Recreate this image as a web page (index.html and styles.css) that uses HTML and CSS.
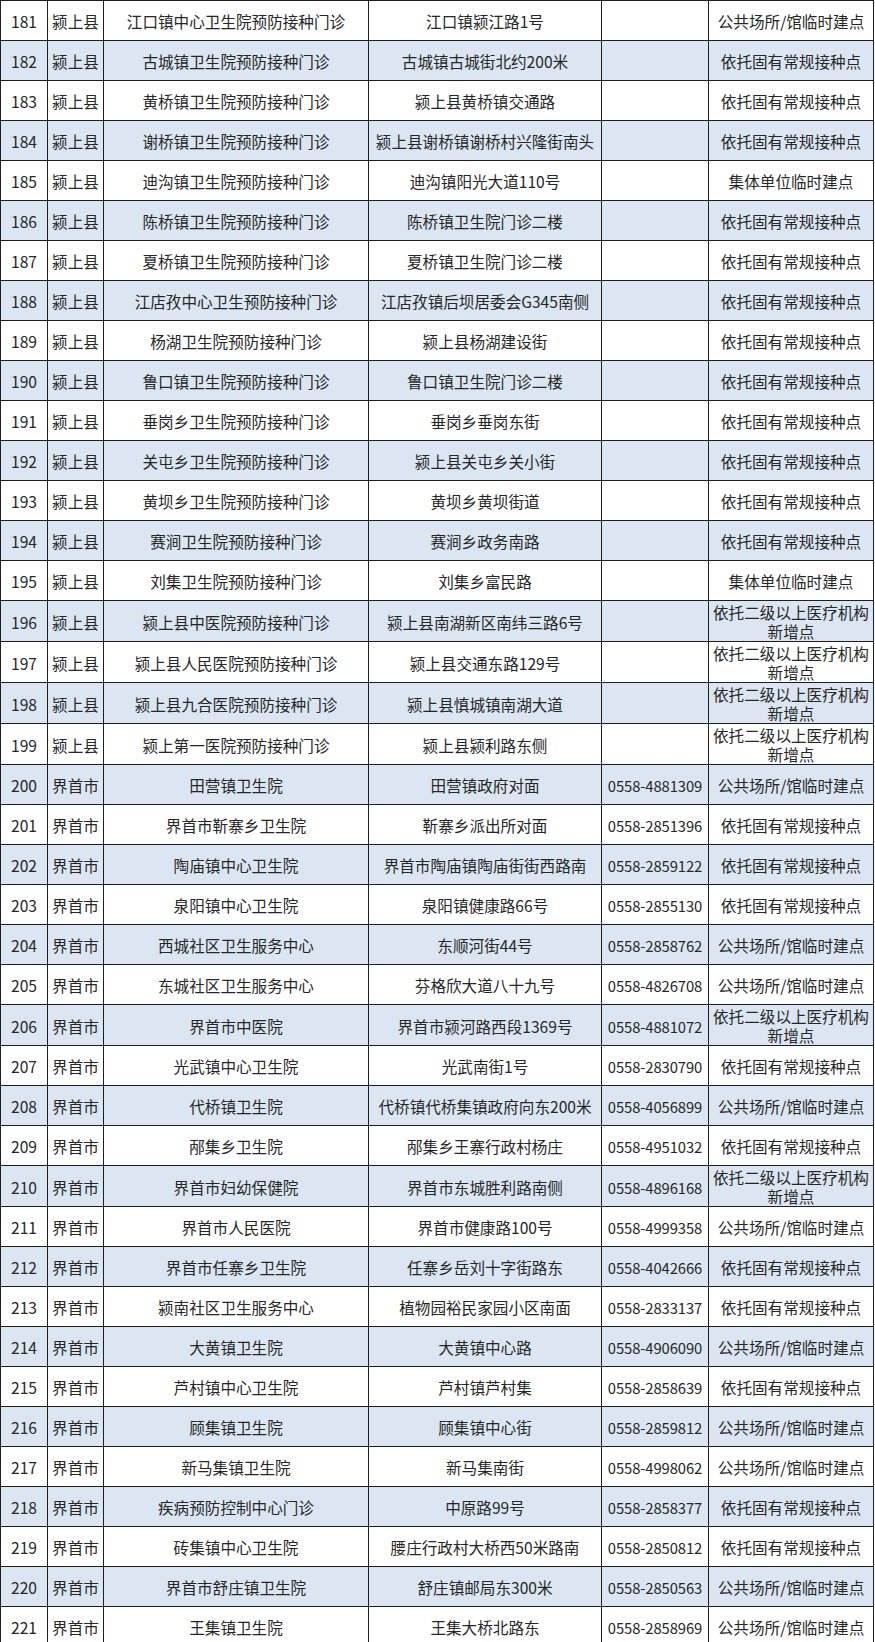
FILE: index.html
```html
<!DOCTYPE html>
<html lang="zh-CN">
<head>
<meta charset="utf-8">
<title>接种点列表</title>
<link rel="stylesheet" href="styles.css">
</head>
<body>
<table class="sites">
<colgroup>
<col class="c-no"><col class="c-area"><col class="c-name"><col class="c-addr"><col class="c-tel"><col class="c-type">
</colgroup>
<tbody>
<tr><td>181</td><td>颍上县</td><td>江口镇中心卫生院预防接种门诊</td><td>江口镇颍江路1号</td><td></td><td>公共场所/馆临时建点</td></tr>
<tr><td>182</td><td>颍上县</td><td>古城镇卫生院预防接种门诊</td><td>古城镇古城街北约200米</td><td></td><td>依托固有常规接种点</td></tr>
<tr><td>183</td><td>颍上县</td><td>黄桥镇卫生院预防接种门诊</td><td>颍上县黄桥镇交通路</td><td></td><td>依托固有常规接种点</td></tr>
<tr><td>184</td><td>颍上县</td><td>谢桥镇卫生院预防接种门诊</td><td>颍上县谢桥镇谢桥村兴隆街南头</td><td></td><td>依托固有常规接种点</td></tr>
<tr><td>185</td><td>颍上县</td><td>迪沟镇卫生院预防接种门诊</td><td>迪沟镇阳光大道110号</td><td></td><td>集体单位临时建点</td></tr>
<tr><td>186</td><td>颍上县</td><td>陈桥镇卫生院预防接种门诊</td><td>陈桥镇卫生院门诊二楼</td><td></td><td>依托固有常规接种点</td></tr>
<tr><td>187</td><td>颍上县</td><td>夏桥镇卫生院预防接种门诊</td><td>夏桥镇卫生院门诊二楼</td><td></td><td>依托固有常规接种点</td></tr>
<tr><td>188</td><td>颍上县</td><td>江店孜中心卫生预防接种门诊</td><td>江店孜镇后坝居委会G345南侧</td><td></td><td>依托固有常规接种点</td></tr>
<tr><td>189</td><td>颍上县</td><td>杨湖卫生院预防接种门诊</td><td>颍上县杨湖建设街</td><td></td><td>依托固有常规接种点</td></tr>
<tr><td>190</td><td>颍上县</td><td>鲁口镇卫生院预防接种门诊</td><td>鲁口镇卫生院门诊二楼</td><td></td><td>依托固有常规接种点</td></tr>
<tr><td>191</td><td>颍上县</td><td>垂岗乡卫生院预防接种门诊</td><td>垂岗乡垂岗东街</td><td></td><td>依托固有常规接种点</td></tr>
<tr><td>192</td><td>颍上县</td><td>关屯乡卫生院预防接种门诊</td><td>颍上县关屯乡关小街</td><td></td><td>依托固有常规接种点</td></tr>
<tr><td>193</td><td>颍上县</td><td>黄坝乡卫生院预防接种门诊</td><td>黄坝乡黄坝街道</td><td></td><td>依托固有常规接种点</td></tr>
<tr><td>194</td><td>颍上县</td><td>赛涧卫生院预防接种门诊</td><td>赛涧乡政务南路</td><td></td><td>依托固有常规接种点</td></tr>
<tr><td>195</td><td>颍上县</td><td>刘集卫生院预防接种门诊</td><td>刘集乡富民路</td><td></td><td>集体单位临时建点</td></tr>
<tr><td>196</td><td>颍上县</td><td>颍上县中医院预防接种门诊</td><td>颍上县南湖新区南纬三路6号</td><td></td><td>依托二级以上医疗机构新增点</td></tr>
<tr><td>197</td><td>颍上县</td><td>颍上县人民医院预防接种门诊</td><td>颍上县交通东路129号</td><td></td><td>依托二级以上医疗机构新增点</td></tr>
<tr><td>198</td><td>颍上县</td><td>颍上县九合医院预防接种门诊</td><td>颍上县慎城镇南湖大道</td><td></td><td>依托二级以上医疗机构新增点</td></tr>
<tr><td>199</td><td>颍上县</td><td>颍上第一医院预防接种门诊</td><td>颍上县颍利路东侧</td><td></td><td>依托二级以上医疗机构新增点</td></tr>
<tr><td>200</td><td>界首市</td><td>田营镇卫生院</td><td>田营镇政府对面</td><td>0558-4881309</td><td>公共场所/馆临时建点</td></tr>
<tr><td>201</td><td>界首市</td><td>界首市靳寨乡卫生院</td><td>靳寨乡派出所对面</td><td>0558-2851396</td><td>依托固有常规接种点</td></tr>
<tr><td>202</td><td>界首市</td><td>陶庙镇中心卫生院</td><td>界首市陶庙镇陶庙街街西路南</td><td>0558-2859122</td><td>依托固有常规接种点</td></tr>
<tr><td>203</td><td>界首市</td><td>泉阳镇中心卫生院</td><td>泉阳镇健康路66号</td><td>0558-2855130</td><td>依托固有常规接种点</td></tr>
<tr><td>204</td><td>界首市</td><td>西城社区卫生服务中心</td><td>东顺河街44号</td><td>0558-2858762</td><td>公共场所/馆临时建点</td></tr>
<tr><td>205</td><td>界首市</td><td>东城社区卫生服务中心</td><td>芬格欣大道八十九号</td><td>0558-4826708</td><td>公共场所/馆临时建点</td></tr>
<tr><td>206</td><td>界首市</td><td>界首市中医院</td><td>界首市颍河路西段1369号</td><td>0558-4881072</td><td>依托二级以上医疗机构新增点</td></tr>
<tr><td>207</td><td>界首市</td><td>光武镇中心卫生院</td><td>光武南街1号</td><td>0558-2830790</td><td>依托固有常规接种点</td></tr>
<tr><td>208</td><td>界首市</td><td>代桥镇卫生院</td><td>代桥镇代桥集镇政府向东200米</td><td>0558-4056899</td><td>公共场所/馆临时建点</td></tr>
<tr><td>209</td><td>界首市</td><td>邴集乡卫生院</td><td>邴集乡王寨行政村杨庄</td><td>0558-4951032</td><td>依托固有常规接种点</td></tr>
<tr><td>210</td><td>界首市</td><td>界首市妇幼保健院</td><td>界首市东城胜利路南侧</td><td>0558-4896168</td><td>依托二级以上医疗机构新增点</td></tr>
<tr><td>211</td><td>界首市</td><td>界首市人民医院</td><td>界首市健康路100号</td><td>0558-4999358</td><td>公共场所/馆临时建点</td></tr>
<tr><td>212</td><td>界首市</td><td>界首市任寨乡卫生院</td><td>任寨乡岳刘十字街路东</td><td>0558-4042666</td><td>依托固有常规接种点</td></tr>
<tr><td>213</td><td>界首市</td><td>颍南社区卫生服务中心</td><td>植物园裕民家园小区南面</td><td>0558-2833137</td><td>依托固有常规接种点</td></tr>
<tr><td>214</td><td>界首市</td><td>大黄镇卫生院</td><td>大黄镇中心路</td><td>0558-4906090</td><td>公共场所/馆临时建点</td></tr>
<tr><td>215</td><td>界首市</td><td>芦村镇中心卫生院</td><td>芦村镇芦村集</td><td>0558-2858639</td><td>依托固有常规接种点</td></tr>
<tr><td>216</td><td>界首市</td><td>顾集镇卫生院</td><td>顾集镇中心街</td><td>0558-2859812</td><td>公共场所/馆临时建点</td></tr>
<tr><td>217</td><td>界首市</td><td>新马集镇卫生院</td><td>新马集南街</td><td>0558-4998062</td><td>公共场所/馆临时建点</td></tr>
<tr><td>218</td><td>界首市</td><td>疾病预防控制中心门诊</td><td>中原路99号</td><td>0558-2858377</td><td>依托固有常规接种点</td></tr>
<tr><td>219</td><td>界首市</td><td>砖集镇中心卫生院</td><td>腰庄行政村大桥西50米路南</td><td>0558-2850812</td><td>依托固有常规接种点</td></tr>
<tr><td>220</td><td>界首市</td><td>界首市舒庄镇卫生院</td><td>舒庄镇邮局东300米</td><td>0558-2850563</td><td>公共场所/馆临时建点</td></tr>
<tr><td>221</td><td>界首市</td><td>王集镇卫生院</td><td>王集大桥北路东</td><td>0558-2858969</td><td>公共场所/馆临时建点</td></tr>
</tbody>
</table>
</body>
</html>
```
FILE: styles.css
```css
html, body {
  margin: 0;
  padding: 0;
  background: #ffffff;
}

.sites {
  border-collapse: separate;
  border-spacing: 0;
  table-layout: fixed;
  width: 874px;
  border-top: 1px solid #1e1e1e;
  border-left: 1px solid #1e1e1e;
  font-family: "Noto Sans CJK SC", "Noto Sans", sans-serif;
  font-size: 15.6px;
  color: #262626;
}

.c-no { width: 47px; }
.c-area { width: 56px; }
.c-name { width: 265px; }
.c-addr { width: 233px; }
.c-tel { width: 107px; }
.c-type { width: 165px; }

.sites td {
  box-sizing: border-box;
  height: 40px;
  padding: 2px 1px 0;
  border-right: 1px solid #1e1e1e;
  border-bottom: 1px solid #1e1e1e;
  text-align: center;
  vertical-align: middle;
  line-height: 19px;
  white-space: normal;
  overflow: hidden;
}

.sites td:nth-child(5) {
  font-size: 14.8px;
  letter-spacing: -0.1px;
}

.sites tr:nth-child(even) td {
  background: #dce6f2;
}
```
